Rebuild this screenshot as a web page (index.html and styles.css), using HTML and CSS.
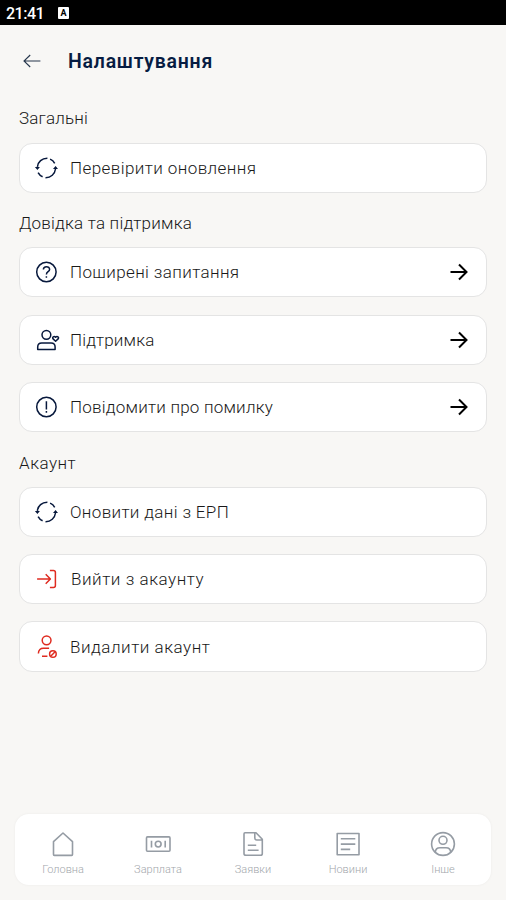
FILE: index.html
```html
<!DOCTYPE html>
<html lang="uk">
<head>
<meta charset="utf-8">
<title>Налаштування</title>
<link rel="stylesheet" href="styles.css">
</head>
<body>
<svg class="defs" width="0" height="0" aria-hidden="true">
  <symbol id="refresh" viewBox="0 0 24 24"><path d="M3 10.8C3.5 5.9 7.6 2.2 13 2.3M15.7 3.1Q18.8 4.4 20.3 7.4M21.1 13C20.5 18 16.4 21.8 11.1 21.7M8.2 20.8Q5.2 19.4 3.7 16.6"/><path class="solid" d="M.5 11H5.5L3 13.9ZM18.6 13H23.6L21.2 10Z"/></symbol>
  <symbol id="forward" viewBox="0 0 18 18"><path d="M.5 9H16.5M9 1.5L16.5 9L9 16.5"/></symbol>
</svg>
<header class="status"><span>21:41</span><span class="badge">A</span></header>
<main>
  <div class="title-row">
    <svg class="back" width="18" height="14" viewBox="0 0 18 14"><path d="M17.4 7H1M7.2 1L1 7L7.2 13"/></svg>
    <h1>Налаштування</h1>
  </div>
  <section>
    <h2 class="t-general">Загальні</h2>
    <div class="card"><svg class="icon" viewBox="0 0 24 24"><use href="#refresh"/></svg><span class="t-check">Перевірити оновлення</span></div>
  </section>
  <section>
    <h2 class="t-help">Довідка та підтримка</h2>
    <div class="card"><svg class="icon" viewBox="0 0 24 24"><circle cx="12" cy="12" r="9.7"/><path d="M9 9.6C9 5.6 15.3 5.7 15.2 9.5C15.1 11.7 12 11.8 12 14.4M12 16.2V17.7"/></svg><span class="t-faq">Поширені запитання</span><svg class="go"><use href="#forward"/></svg></div>
    <div class="card"><svg class="icon" viewBox="0 0 24 24"><circle cx="12" cy="6.8" r="4.4"/><path d="M3.3 21.4V19Q3.3 15 7.3 15H16.7Q20.7 15 20.7 19V21.4Z"/><path d="M21.2 13.2L18.7 10.9C17.3 9.2 19.6 7.5 21.2 9.2C22.8 7.5 25.1 9.2 23.7 10.9Z"/></svg><span class="t-support">Підтримка</span><svg class="go"><use href="#forward"/></svg></div>
    <div class="card"><svg class="icon" viewBox="0 0 24 24"><circle cx="12" cy="12" r="9.7"/><path d="M12 6.3V14.4M12 16.1V17.7"/></svg><span class="t-report">Повідомити про помилку</span><svg class="go"><use href="#forward"/></svg></div>
  </section>
  <section>
    <h2 class="t-account">Акаунт</h2>
    <div class="card"><svg class="icon" viewBox="0 0 24 24"><use href="#refresh"/></svg><span class="t-erp">Оновити дані з ЕРП</span></div>
    <div class="card"><svg class="icon danger" viewBox="0 0 24 24"><path d="M2.7 12H15.8M11.3 7.3L16 12L11.3 16.7M15.5 3.4H19Q21 3.4 21 5.4V18.6Q21 20.6 19 20.6H15.5"/></svg><span class="t-logout">Вийти з акаунту</span></div>
    <div class="card"><svg class="icon danger" viewBox="0 0 24 24"><circle cx="12.2" cy="5.3" r="4.4"/><path d="M4 18.4C4 14.8 6.2 13.3 9 13.3H14.7M7.6 21.3H13"/><circle cx="18.5" cy="19" r="3.3"/><path d="M16.3 21.2L20.7 16.8"/></svg><span class="t-delete">Видалити акаунт</span></div>
  </section>
</main>
<nav>
  <a><svg viewBox="0 0 26 26"><path d="M3.5 23.6V10.7L13 2L22.5 10.7V23.6Q22.5 24.4 21.7 24.4H4.3Q3.5 24.4 3.5 23.6Z"/></svg><span>Головна</span></a>
  <a><svg viewBox="0 0 26 26"><rect x="1.5" y="5.9" width="23.5" height="14.4" rx="1"/><circle cx="13.2" cy="13.1" r="2.9"/><path d="M6.5 9.8V16.5M20.2 9.8V16.5"/></svg><span>Зарплата</span></a>
  <a><svg viewBox="0 0 26 26"><path d="M5 1.8H16L22.3 8.2V22.4Q22.3 24.2 20.5 24.2H6Q4 24.2 4 22.4V3Q4 1.8 5 1.8ZM14.8 2V7Q14.8 9 16.8 9H22M7.8 14.3H16.2M7.8 19.3H18.6"/></svg><span>Заявки</span></a>
  <a><svg viewBox="0 0 26 26"><path d="M2.2 2.5H24V23.7H2.2ZM5.8 7.7H20.3M5.8 13.1H20.3M5.8 18.4H15.2"/></svg><span>Новини</span></a>
  <a><svg viewBox="0 0 26 26"><circle cx="13" cy="13" r="11.4"/><circle cx="13" cy="9.3" r="4"/><path d="M5.3 21.3Q5.5 16.7 10 16.7H16Q20.5 16.7 20.7 21.3"/></svg><span>Інше</span></a>
</nav>
</body>
</html>
```
FILE: styles.css
```css
* { box-sizing: border-box; }
body {
  margin: 0;
  height: 900px;
  display: flex;
  flex-direction: column;
  background: #f8f7f5;
  color: #191919;
  font-family: Roboto, "Liberation Sans", sans-serif;
  overflow: hidden;
}
svg { flex: none; fill: none; stroke: currentColor; overflow: visible; }
.defs { position: absolute; }
.status {
  height: 25px;
  background: #000;
  color: #fff;
  display: flex;
  align-items: center;
  gap: 14px;
  padding: 1px 0 0 6px;
  font-size: 16px;
  font-weight: 500;
  letter-spacing: -0.5px;
}
.badge {
  width: 11px;
  height: 12px;
  border-radius: 1px;
  background: #fff;
  color: #000;
  font-size: 9px;
  line-height: 12px;
  font-weight: 700;
  letter-spacing: 0;
  text-align: center;
}
main { flex: 1; padding: 0 19px; }
.title-row { height: 72px; display: flex; align-items: center; padding-left: 4px; gap: 27px; }
.back { color: #26364c; stroke-width: 1.1; }
h1 { margin: 0; padding-top: 2px; color: #071c42; font-size: 19.5px; font-weight: 600; letter-spacing: 0.75px; line-height: 24px; }
h2 { margin: 0 0 -6px; height: 25px; font-size: 17px; line-height: 22px; font-weight: 300; white-space: nowrap; }
section { padding-top: 10px; display: flex; flex-direction: column; gap: 17.2px; margin-bottom: 7.7px; }
section + section h2 { line-height: 24px; margin-bottom: -6.3px; }
section:last-child { padding-top: 10.6px; }
.card {
  height: 50.3px;
  border: 1px solid #e4e4e4;
  border-radius: 13px;
  background: #fff;
  display: flex;
  align-items: center;
  padding: 0 18px 0 14px;
  gap: 12px;
  font-size: 17px;
  font-weight: 300;
  white-space: nowrap;
}
.t-general, .t-support { letter-spacing: 0.17px; }
.t-help, .t-report { letter-spacing: 0.22px; }
.t-check { letter-spacing: 0.42px; }
.t-faq { letter-spacing: 0.38px; }
.t-account { letter-spacing: 0.5px; }
.t-erp { letter-spacing: 0.35px; }
.t-logout { letter-spacing: 0.55px; padding-left: 1px; }
.t-delete { letter-spacing: 0.53px; }
.icon { width: 24px; height: 24px; color: #07183c; stroke-width: 1.5; stroke-linejoin: round; }
.icon > * { transform: translateX(0.4px); }
.danger { color: #df2b20; }
.solid { fill: currentColor; stroke: none; }
.go { width: 18px; height: 18px; margin-left: auto; color: #000; stroke-width: 2; }
nav {
  height: 71px;
  margin: 0 15px 15px;
  border-radius: 14px;
  background: #fff;
  box-shadow: 0 0 3px #0000000d;
  display: grid;
  grid-template-columns: repeat(5, 1fr);
  padding: 17px 1px 0 0;
}
nav a { display: flex; flex-direction: column; align-items: center; color: #a3a7ac; font-size: 11px; line-height: 14px; font-weight: 300; gap: 5.5px; }
nav span { padding-left: 1px; }
nav svg { width: 26px; height: 26px; color: #959ca4; stroke-width: 1.6; stroke-linejoin: round; }
```
